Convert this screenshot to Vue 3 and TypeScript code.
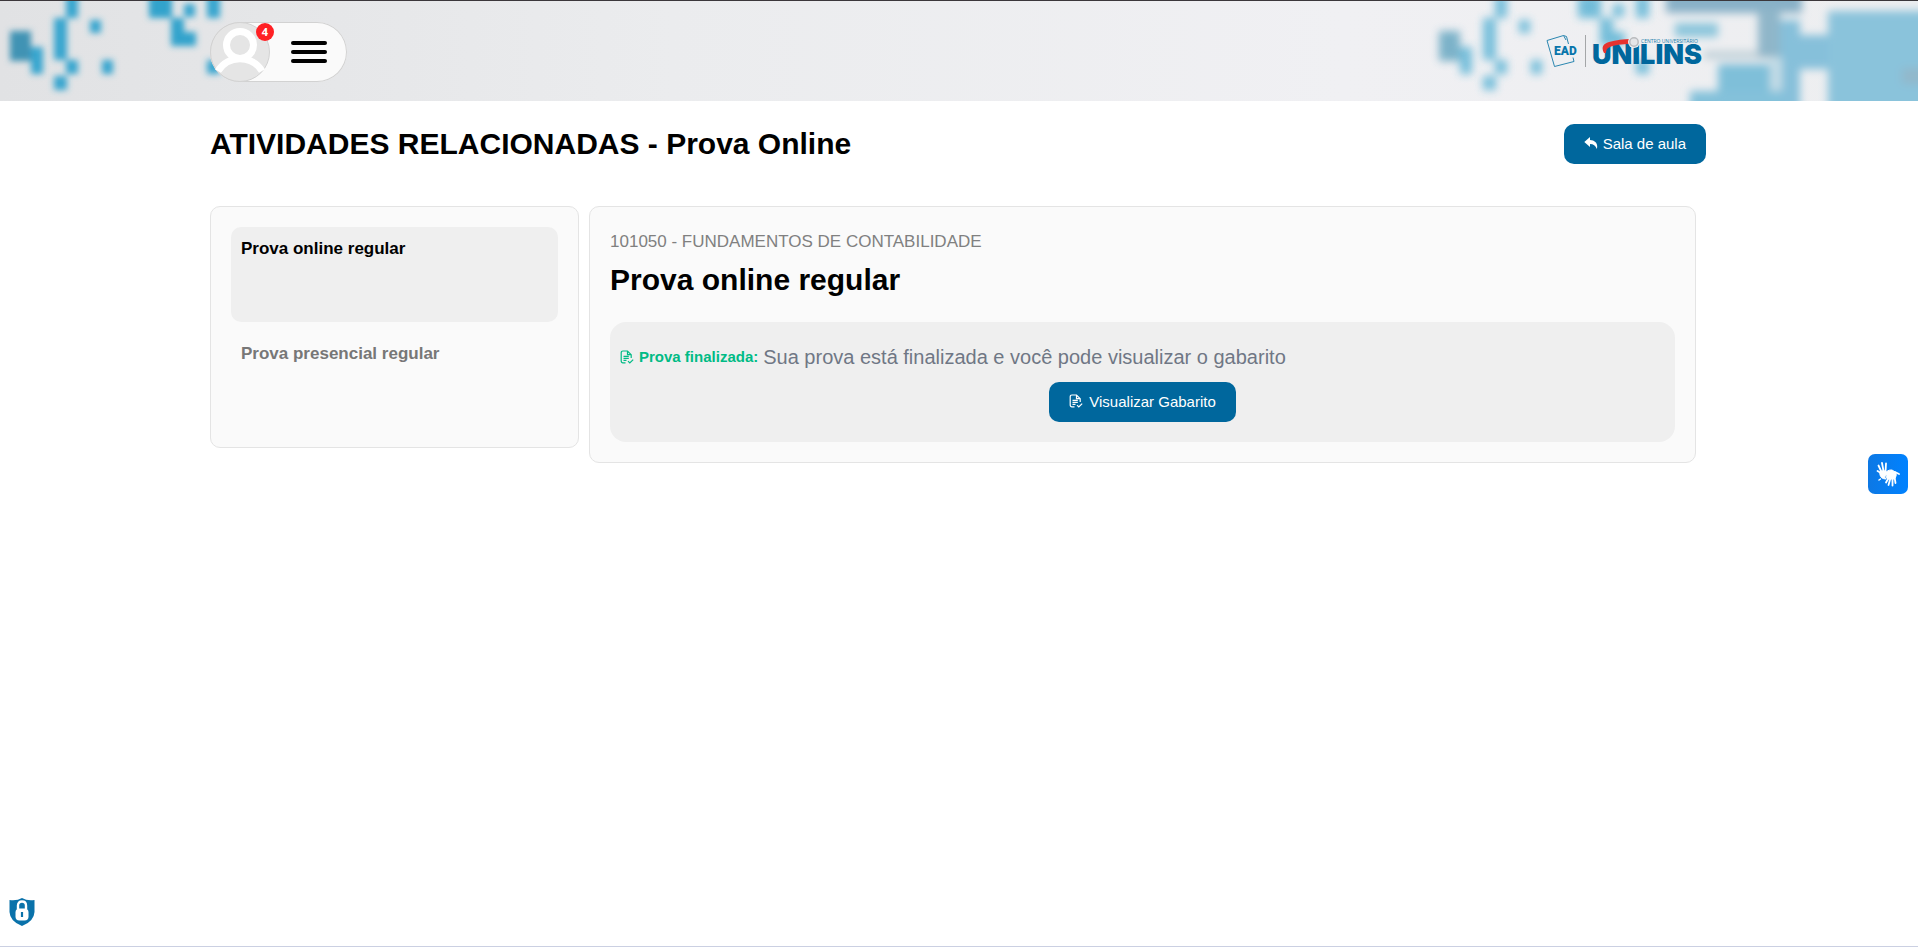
<script setup lang="ts">
import { ref } from 'vue'

interface Exam {
  id: number
  name: string
}

interface Block {
  x: number
  y: number
  w: number
  h: number
  fill: string
}

const exams: Exam[] = [
  { id: 1, name: 'Prova online regular' },
  { id: 2, name: 'Prova presencial regular' },
]
const selected = ref<number>(1)
const notifications = 4

const cluster: Block[] = [
  { x: 10, y: 30, w: 21, h: 30, fill: '#3f93b4' },
  { x: 31, y: 46, w: 12, h: 27, fill: '#38a6cf' },
  { x: 54, y: 17, w: 13, h: 42, fill: '#38a6cf' },
  { x: 66, y: -6, w: 12, h: 23, fill: '#38a6cf' },
  { x: 90, y: 19, w: 11, h: 13, fill: '#38a6cf' },
  { x: 66, y: 59, w: 12, h: 14, fill: '#38a6cf' },
  { x: 54, y: 75, w: 13, h: 14, fill: '#38a6cf' },
  { x: 102, y: 59, w: 11, h: 14, fill: '#38a6cf' },
  { x: 149, y: -6, w: 23, h: 23, fill: '#31a3cc' },
  { x: 184, y: 3, w: 11, h: 13, fill: '#38a6cf' },
  { x: 171, y: 17, w: 13, h: 28, fill: '#31a3cc' },
  { x: 184, y: 31, w: 12, h: 14, fill: '#31a3cc' },
  { x: 207, y: -6, w: 13, h: 23, fill: '#38a6cf' },
  { x: 207, y: 59, w: 13, h: 14, fill: '#38a6cf' },
]

const panels: Block[] = [
  { x: 1704, y: 50, w: 70, h: 8, fill: '#c1d1d9' },
  { x: 1666, y: -10, w: 136, h: 22, fill: '#88b1c7' },
  { x: 1675, y: 22, w: 43, h: 14, fill: '#8cc6dc' },
  { x: 1758, y: 8, w: 22, h: 48, fill: '#8fb6c9' },
  { x: 1780, y: 19, w: 20, h: 92, fill: '#86c0da' },
  { x: 1770, y: 56, w: 12, h: 34, fill: '#c3dce6' },
  { x: 1718, y: 63, w: 52, h: 48, fill: '#7fbfd9' },
  { x: 1690, y: 90, w: 92, h: 21, fill: '#84c1da' },
  { x: 1798, y: 34, w: 34, h: 34, fill: '#86c0da' },
  { x: 1828, y: 10, w: 110, h: 101, fill: '#8ac3db' },
  { x: 1902, y: 67, w: 36, h: 16, fill: '#92b8cb' },
]
</script>

<template>
  <div class="page">
    <header class="banner">
      <svg class="pattern" viewBox="0 0 1918 100" preserveAspectRatio="xMidYMid slice" aria-hidden="true">
        <defs>
          <filter id="soft" x="-5%" y="-30%" width="110%" height="160%">
            <feGaussianBlur stdDeviation="3" />
          </filter>
          <filter id="softer" x="-5%" y="-30%" width="110%" height="160%">
            <feGaussianBlur stdDeviation="4.500" />
          </filter>
        </defs>
        <g filter="url(#soft)">
          <rect v-for="(b, i) in cluster" :key="i" :x="b.x" :y="b.y" :width="b.w" :height="b.h" :fill="b.fill" />
        </g>
        <g filter="url(#softer)" opacity="0.66">
          <rect v-for="(b, i) in cluster" :key="i" :x="b.x + 1429" :y="b.y" :width="b.w" :height="b.h" :fill="b.fill" />
        </g>
        <g filter="url(#softer)">
          <rect v-for="(b, i) in panels" :key="i" :x="b.x" :y="b.y" :width="b.w" :height="b.h" :fill="b.fill" />
        </g>
      </svg>
      <div class="wrap banner-row">
        <div class="user-menu">
          <button class="avatar" type="button" aria-label="Perfil">
            <svg viewBox="0 0 60 60" aria-hidden="true">
              <circle cx="30" cy="30" r="29.500" fill="#e5e5e5" stroke="#d2d2d2" />
              <circle cx="30" cy="23" r="13.500" fill="none" stroke="#fff" stroke-width="7" />
              <path d="M8 49C18 32.500 42 32.500 52 49" fill="none" stroke="#fff" stroke-width="7" />
            </svg>
            <span class="badge">{{ notifications }}</span>
          </button>
          <button class="burger" type="button" aria-label="Menu"><i></i><i></i><i></i></button>
        </div>
        <a class="logo" href="#" aria-label="EAD Unilins">
          <svg viewBox="0 0 160 36" aria-hidden="true">
            <path d="M20 7L17.500 2.500L1 7.500L8.500 33.500L28 28.500L27 24.500M17.500 2.500L20.500 3.500L22.500 11" fill="none" stroke="#2a86b0" stroke-width="1" />
            <text class="ead" x="8" y="22">EAD</text>
            <path d="M39.500 2V34" stroke="#a4a6a8" />
            <text class="brand" x="46" y="31">UNILINS</text>
            <path d="M58 20C55 14 57 11 63 9C70 7 78 6 84 6V11C76 11 68 12 64 14C61 15 60 17 60 20Z" fill="#e6322f" />
            <circle cx="88" cy="9" r="6" fill="#eeeff2" />
            <circle cx="88" cy="9" r="4.200" fill="#e4e5e8" stroke="#b9bbbe" stroke-width="1.500" />
            <text class="tag" x="95" y="10">CENTRO UNIVERSITÁRIO</text>
          </svg>
        </a>
      </div>
    </header>

    <main class="wrap content">
      <div class="heading">
        <h1>ATIVIDADES RELACIONADAS - Prova Online</h1>
        <a class="btn back" href="#">
          <svg width="14" height="14" viewBox="0 0 14 14" aria-hidden="true">
            <path d="M6 1L0.300 6L6 11V8C9.500 8 11.500 9.500 12.800 13C14.300 8 11.500 4.200 6 4Z" fill="#fff" />
          </svg>
          Sala de aula
        </a>
      </div>

      <div class="columns">
        <nav class="card exams" aria-label="Provas">
          <button
            v-for="exam in exams"
            :key="exam.id"
            type="button"
            class="exam"
            :class="{ active: exam.id === selected }"
            @click="selected = exam.id"
          >
            {{ exam.name }}
          </button>
        </nav>

        <section class="card">
          <p class="course">101050 - FUNDAMENTOS DE CONTABILIDADE</p>
          <h2>Prova online regular</h2>
          <div class="status">
            <p class="message">
              <svg class="doc" viewBox="0 0 14 14" aria-hidden="true">
                <path d="M5.500 12.800H3Q1.200 12.800 1.200 11V2.800Q1.200 1 3 1H7.500L11.200 4.700V8M7.500 1V4.700H11.200M3.500 6.300H8.800M3.500 8.300H8.800M3.500 10.300H6.500M8 11.200L9.800 13L13.200 9.600" />
              </svg>
              <strong>Prova finalizada:</strong>
              <span>Sua prova está finalizada e você pode visualizar o gabarito</span>
            </p>
            <button class="btn answers" type="button">
              <svg class="doc" viewBox="0 0 14 14" aria-hidden="true">
                <path d="M5.500 12.800H3Q1.200 12.800 1.200 11V2.800Q1.200 1 3 1H7.500L11.200 4.700V8M7.500 1V4.700H11.200M3.500 6.300H8.800M3.500 8.300H8.800M3.500 10.300H6.500M8 11.200L9.800 13L13.200 9.600" />
              </svg>
              Visualizar Gabarito
            </button>
          </div>
        </section>
      </div>
    </main>

    <button class="libras" type="button" aria-label="Libras">
      <svg viewBox="0 0 40 40" fill="none" stroke="#fff" stroke-linecap="round" aria-hidden="true">
        <path d="M12 18Q14 16 17 17L20 19L17.500 21Q16 23.500 18 25Q13 25 12 21Z" fill="#fff" stroke-width="1" />
        <path d="M13 19L9.500 17M13.500 18L10.500 11.500M15.500 17L14 9M17.500 18L18 9.500" stroke-width="1.800" />
        <path d="M17 20Q19 15.500 24 16L28 18.500Q29 22 26.500 25L20 25Q17 24 19 21Z" fill="#fff" stroke-width="1" />
        <path d="M20.500 24L18 28.500M22.500 24L20.500 31M24.500 24L24.500 31.500M26.500 23L27.500 29M27 18L31 20" stroke-width="1.800" />
        <path d="M11 26L12.500 25" stroke-width="1.500" />
      </svg>
    </button>

    <button class="privacy" type="button" aria-label="Privacidade">
      <svg viewBox="0 0 26 28" aria-hidden="true">
        <path d="M13 0Q18 3 25.500 2V14Q25 23.500 13 28Q1 23.500 0.500 14V2Q8 3 13 0Z" fill="#0a72aa" />
        <path d="M9 11V7.500Q9 3.500 13 3.500Q17 3.500 17 7.500V11" fill="none" stroke="#fff" stroke-width="2.400" />
        <rect x="6.500" y="10.500" width="13" height="12" rx="4" fill="#fff" />
        <path d="M13 14V19" stroke="#0a72aa" stroke-width="2.200" />
      </svg>
    </button>
  </div>
</template>

<style>
body {
  background: #fff;
}
</style>

<style scoped>
.page {
  box-sizing: border-box;
  min-height: 100vh;
  border-bottom: 1px solid #cbd0e2;
  font-family: "Liberation Sans", Arial, sans-serif;
  color: #000;
}
h1, h2, p {
  margin: 0;
}
button {
  font-family: inherit;
  border: 0;
  padding: 0;
  cursor: pointer;
}
a {
  text-decoration: none;
}
.wrap {
  width: 78%;
  margin-left: 10.95%;
}
.banner {
  position: relative;
  overflow: hidden;
  border-top: 1px solid #3b373b;
  background: linear-gradient(90deg, #e1e2e4 0%, #ebecee 35%, #f0f0f3 70%, #edeef0 100%);
}
.pattern {
  position: absolute;
  inset: 0;
  width: 100%;
  height: 100%;
}
.banner-row {
  position: relative;
  display: flex;
  align-items: center;
  justify-content: space-between;
  height: 100px;
}
.user-menu {
  box-sizing: border-box;
  display: flex;
  align-items: center;
  height: 60px;
  margin-top: 2px;
  padding-right: 20px;
  border-radius: 30px;
  background: #fafafa;
  box-shadow: inset 0 0 0 1px #d2d2d2;
}
.avatar {
  position: relative;
  width: 60px;
  height: 60px;
  background: none;
}
.avatar svg {
  display: block;
}
.badge {
  position: absolute;
  top: 1px;
  right: -4px;
  width: 18px;
  height: 18px;
  border-radius: 50%;
  background: #ff2024;
  color: #fff;
  font: bold 11px/18px "Open Sans", sans-serif;
}
.burger {
  display: grid;
  gap: 5px;
  width: 36px;
  margin-left: 21px;
  background: none;
}
.burger i {
  height: 4px;
  border-radius: 2px;
  background: #000;
}
.logo svg {
  display: block;
  width: 160px;
  height: 36px;
}
.ead {
  font: 900 12px Roboto, sans-serif;
  fill: #0875ab;
}
.brand {
  font: 900 27px Inter, sans-serif;
  fill: #00679d;
}
.tag {
  font: 5px "Open Sans", sans-serif;
  fill: #2480ac;
}
.content {
  padding-top: 23px;
}
.heading {
  display: flex;
  align-items: center;
  justify-content: space-between;
  margin-bottom: 42px;
}
h1, h2 {
  font-size: 30px;
  font-weight: bold;
}
h1 {
  line-height: 40px;
}
.btn {
  box-sizing: border-box;
  display: flex;
  align-items: center;
  height: 40px;
  padding: 0 20px 2px;
  border-radius: 10px;
  background: #00679d;
  color: #fff;
  font-size: 15px;
}
.back {
  gap: 5px;
}
.columns {
  display: grid;
  grid-template-columns: 1fr 3fr;
  align-items: start;
  gap: 10px;
  padding-right: 10px;
}
.card {
  padding: 20px;
  border: 1px solid #e4e4e4;
  border-radius: 10px;
  background: #fafafa;
}
.exams {
  display: grid;
  gap: 10px;
}
.exam {
  display: flex;
  min-height: 95px;
  padding: 10px;
  border-radius: 10px;
  background: none;
  color: #777;
  font-size: 17px;
  font-weight: bold;
  line-height: 24px;
}
.exam.active {
  background: #efefef;
  color: #000;
}
.course {
  color: #808080;
  font-size: 17px;
  line-height: 30px;
}
h2 {
  margin-bottom: 20px;
  line-height: 45px;
}
.status {
  display: grid;
  gap: 10px;
  justify-items: center;
  padding: 20px 10px;
  border-radius: 16px;
  background: #efefef;
}
.message {
  display: flex;
  align-items: center;
  gap: 5px;
  justify-self: stretch;
  color: #6f7785;
  font-size: 20px;
  line-height: 30px;
}
.message strong,
.message .doc {
  color: #00bb85;
}
.message strong {
  font-size: 15px;
}
.doc {
  width: 14px;
  height: 14px;
  fill: none;
  stroke: currentColor;
  stroke-width: 1.2;
}
.answers {
  gap: 6px;
}
.libras {
  position: fixed;
  top: 454px;
  right: 10px;
  width: 40px;
  height: 40px;
  border-radius: 7px;
  background: linear-gradient(90deg, #0d78e4, #0082ff);
}
.libras svg {
  display: block;
}
.privacy {
  position: fixed;
  bottom: 21px;
  left: 9px;
  width: 26px;
  height: 28px;
  background: none;
}
.privacy svg {
  display: block;
}
</style>
